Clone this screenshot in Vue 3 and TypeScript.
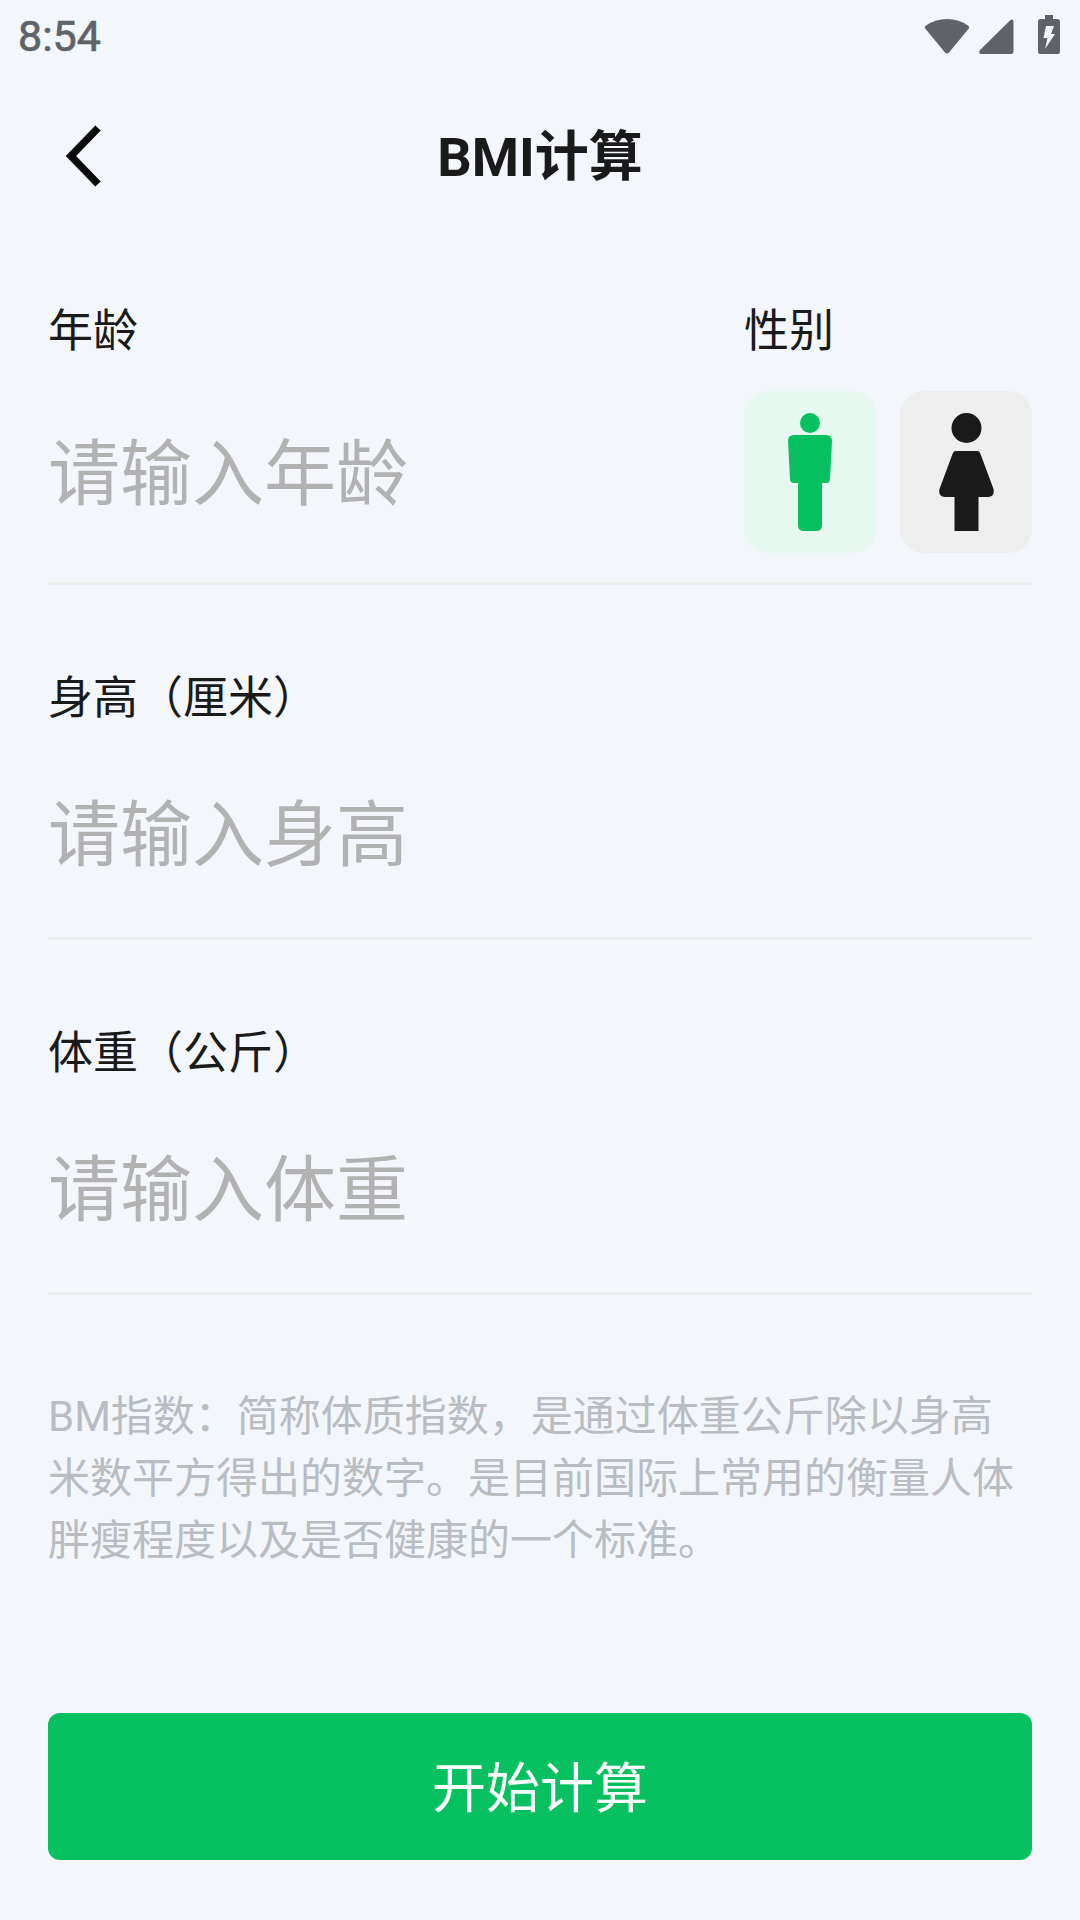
<script setup lang="ts">
const fields = [
  { label: '身高（厘米）', placeholder: '请输入身高' },
  { label: '体重（公斤）', placeholder: '请输入体重' },
]
</script>

<template>
  <div class="page">
    <div class="status-bar">
      <span class="time">8:54</span>
      <div class="status-icons">
        <svg class="wifi" width="46" height="36" viewBox="0 0 46 36">
          <path d="M23 35.500 Q21.800 35.500 21 34.500 L1.200 10.500 Q0 9 1.800 7.700 Q11 1 23 1 Q35 1 44.200 7.700 Q46 9 44.800 10.500 L25 34.500 Q24.200 35.500 23 35.500 Z" fill="#5f6368" />
        </svg>
        <svg class="signal" width="35" height="35" viewBox="0 0 35 35">
          <path d="M1 31 L31 1.500 Q34 -1 34.500 3 L34.500 32 Q34.500 35 32 35 L2.500 35 Q-1 35 1 31 Z" fill="#5f6368" />
        </svg>
        <svg width="22" height="39" viewBox="0 0 22 39">
          <path d="M7 0 H15 V4 H19.500 Q22 4 22 6.500 V36.500 Q22 39 19.500 39 H2.500 Q0 39 0 36.500 V6.500 Q0 4 2.500 4 H7 Z" fill="#5f6368" />
          <path d="M8 11 H16 L13 19 H17 L7 34 L9.500 23 H5.500 Z" fill="#f3f6fb" />
        </svg>
      </div>
    </div>

    <header class="nav">
      <svg class="back" width="38" height="62" viewBox="0 0 38 62">
        <path d="M33 3 L6 31 L33 59" fill="none" stroke="#0a0a0a" stroke-width="7.500" />
      </svg>
      <h1>BMI计算</h1>
    </header>

    <section class="field first">
      <div class="age">
        <div class="label">年龄</div>
        <div class="placeholder">请输入年龄</div>
      </div>
      <div class="gender">
        <div class="label">性别</div>
        <div class="gender-cards">
          <div class="card male">
            <svg width="46" height="120" viewBox="0 0 46 120">
              <circle cx="23" cy="10" r="10" fill="#07c160" />
              <path d="M7 22 H39 Q45 22 45 28 L43 66 Q43 70 39 70 H35 V112 Q35 118 29 118 H17 Q11 118 11 112 V70 H7 Q3 70 3 66 L1 28 Q1 22 7 22 Z" fill="#07c160" />
            </svg>
          </div>
          <div class="card female">
            <svg width="56" height="120" viewBox="0 0 56 120">
              <circle cx="28.500" cy="15" r="15" fill="#1a1a1a" />
              <path d="M17.500 38 H39.500 Q41.500 38 42.500 41 L55.500 76 Q57 84 50 84 H40.500 V118 H16.500 V84 H7 Q0 84 1.500 76 L14.500 41 Q15.500 38 17.500 38 Z" fill="#1a1a1a" />
            </svg>
          </div>
        </div>
      </div>
    </section>

    <section v-for="field in fields" :key="field.label" class="field stacked">
      <div class="label">{{ field.label }}</div>
      <div class="placeholder">{{ field.placeholder }}</div>
    </section>

    <p class="intro">BM指数：简称体质指数，是通过体重公斤除以身高米数平方得出的数字。是目前国际上常用的衡量人体胖瘦程度以及是否健康的一个标准。</p>

    <button class="submit" type="button">开始计算</button>
  </div>
</template>

<style scoped>
.page {
  display: flex;
  flex-direction: column;
  width: 1080px;
  height: 1920px;
  overflow: hidden;
  background: #f3f6fb;
  color: #1a1a1a;
  font-family: "Roboto", "Noto Sans CJK SC", sans-serif;
}

.status-bar {
  display: flex;
  justify-content: space-between;
  align-items: center;
  height: 72px;
  padding: 0 20px 0 18px;
  box-sizing: border-box;
}

.time {
  color: #5f6368;
  font-size: 43px;
  -webkit-text-stroke: 0.7px #5f6368;
}

.status-icons {
  display: flex;
  align-items: flex-end;
  padding-bottom: 4px;
}

.wifi {
  margin-right: 9px;
}

.signal {
  margin-right: 24px;
}

.nav {
  position: relative;
  display: flex;
  justify-content: center;
  align-items: center;
  height: 168px;
  padding-bottom: 7px;
  box-sizing: border-box;
}

.back {
  position: absolute;
  left: 65px;
  top: 53px;
}

.nav h1 {
  margin: 0;
  font-size: 54px;
  font-weight: 700;
}

.field {
  margin: 0 48px;
  border-bottom: 3px solid #eeeeee;
}

.first {
  display: flex;
  justify-content: space-between;
  height: 345px;
  box-sizing: border-box;
  padding-top: 60px;
}

.stacked {
  height: 355px;
  box-sizing: border-box;
  padding-top: 82px;
}

.label {
  font-size: 45px;
  line-height: 64px;
}

.placeholder {
  margin-top: 53px;
  color: #b2b2b2;
  font-size: 72px;
  line-height: 104px;
}

.age .placeholder {
  margin-top: 59px;
}

.gender {
  width: 288px;
}

.gender-cards {
  display: flex;
  gap: 24px;
  margin-top: 27px;
}

.card {
  display: flex;
  justify-content: center;
  align-items: center;
  width: 132px;
  height: 162px;
  padding-top: 2px;
  box-sizing: border-box;
  border-radius: 24px;
}

.male {
  background: #e6f8ef;
}

.female {
  background: #eeeeee;
}

.intro {
  margin: 91px 48px 0;
  color: #b9bcc1;
  font-size: 42px;
  line-height: 62px;
}

.submit {
  margin: 141px 48px 0;
  height: 147px;
  padding: 0 0 4px;
  border: none;
  border-radius: 12px;
  background: #07c160;
  color: #ffffff;
  font-family: inherit;
  font-size: 54px;
}
</style>
